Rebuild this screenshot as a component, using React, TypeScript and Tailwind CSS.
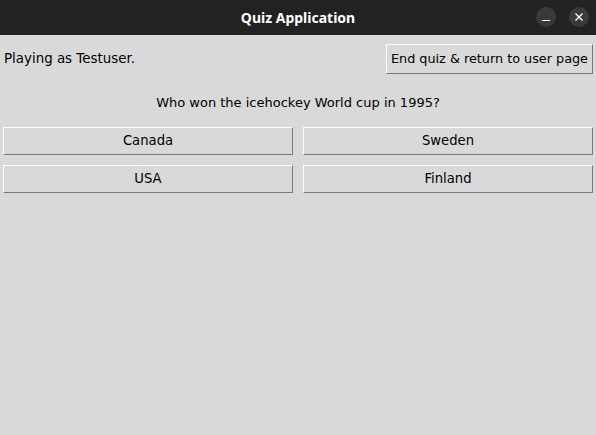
import React from 'react';

const btn =
  'bg-[#d9d9d9] border border-t-white border-l-white border-b-[#7a7a7a] border-r-[#7a7a7a] text-black leading-none';

const answers = ['Canada', 'Sweden', 'USA', 'Finland'];

const App: React.FC = () => {
  return (
    <div className="w-[596px] h-[435px] flex flex-col bg-[#d9d9d9] overflow-hidden font-['DejaVu_Sans',sans-serif]">
      {/* Title bar */}
      <div className="h-[35px] shrink-0 bg-[#222222] relative flex items-center justify-center">
        <span className="text-white font-bold text-[14px] font-['Noto_Sans',sans-serif]">Quiz Application</span>
        <div className="absolute right-[7px] top-[7px] flex gap-[13px]">
          <div className="w-5 h-5 rounded-full bg-[#3a3a3a] flex items-end justify-center pb-[6px]">
            <div className="w-[8px] h-[1.5px] bg-white" />
          </div>
          <div className="w-5 h-5 rounded-full bg-[#3a3a3a] flex items-center justify-center">
            <svg width="10" height="10" viewBox="0 0 10 10">
              <path d="M1.5 1.5 L8.5 8.5 M8.5 1.5 L1.5 8.5" stroke="white" strokeWidth="1.4" />
            </svg>
          </div>
        </div>
      </div>

      {/* Header row */}
      <div className="flex items-center justify-between pl-[4px] pr-[3px] pt-[9px]">
        <span className="text-[13.4px] text-black">Playing as Testuser.</span>
        <button className={btn + ' text-[12.8px] h-[30px] px-[4px]'}>End quiz &amp; return to user page</button>
      </div>

      <p className="text-center text-[13px] text-black leading-none mt-[22px]">Who won the icehockey World cup in 1995?</p>

      <div className="grid grid-cols-2 gap-x-[10px] gap-y-[10px] px-[3px] mt-[18px]">
        {answers.map((a) => (
          <button key={a} className={btn + ' text-[13.2px] h-[28px]'}>
            {a}
          </button>
        ))}
      </div>
    </div>
  );
};

export default App;
